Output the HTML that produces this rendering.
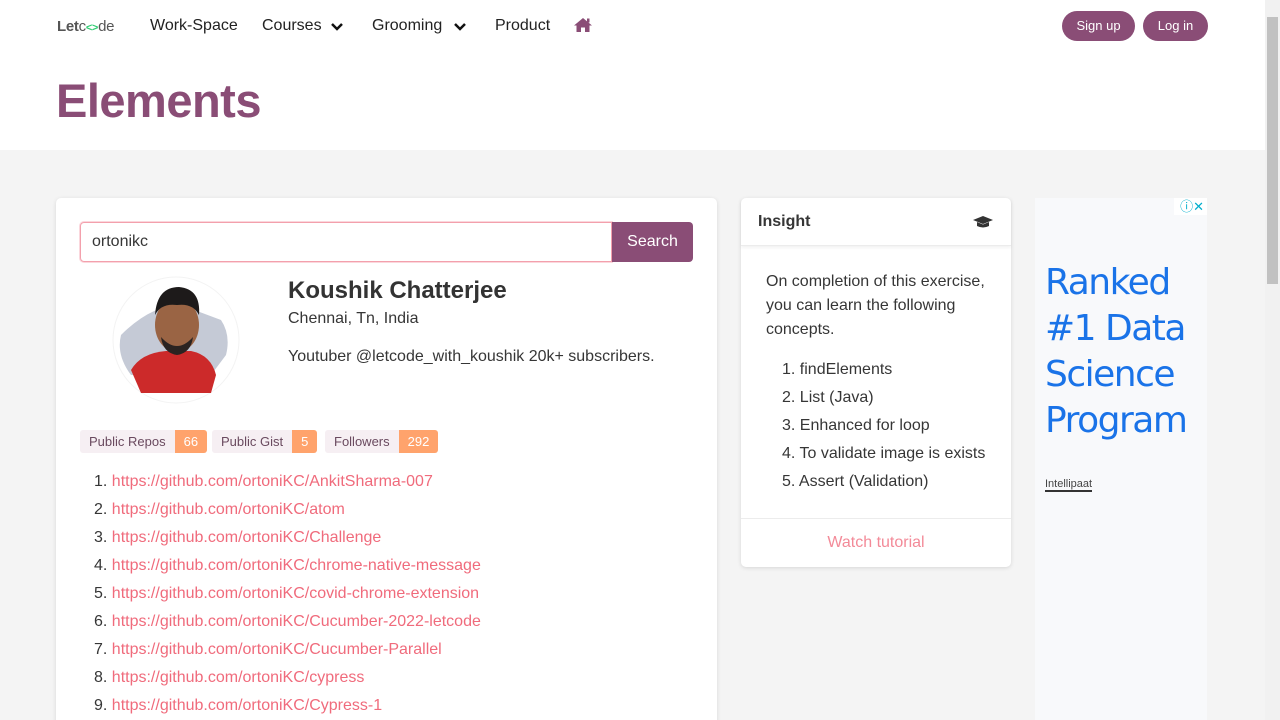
<!DOCTYPE html>
<html><head><meta charset="utf-8"><style>
*{box-sizing:border-box;margin:0;padding:0}
html,body{width:1280px;height:720px;overflow:hidden}
body{background:#f4f4f4;font-family:"Liberation Sans",sans-serif;color:#363636;position:relative}
.top{position:absolute;left:0;top:0;width:1265px;height:150px;background:#fff}
.nav{position:absolute;top:17px;font-size:16px;color:#222}
.logo{position:absolute;left:57px;top:18px;font-size:15px;color:#555;letter-spacing:-0.3px}
.btn{position:absolute;top:11px;height:30px;border-radius:15px;background:#8a4d76;color:#fff;font-size:13px;line-height:30px;text-align:center}
h1{position:absolute;left:56px;top:73px;font-size:47px;color:#8a4d76;font-weight:bold;letter-spacing:-0.5px}
.card{position:absolute;background:#fff;border-radius:5px;box-shadow:0 1px 4px rgba(0,0,0,.12)}
.input{position:absolute;left:24px;top:24px;width:532px;height:40px;border:1px solid #f3a0ac;border-radius:4px 0 0 4px;box-shadow:0 0 0 1px #fbd7dd;font-size:16px;padding:10px 11px}
.sbtn{position:absolute;left:556px;top:24px;width:81px;height:40px;background:#8a4d76;color:#fff;border-radius:0 4px 4px 0;font-size:16px;line-height:40px;text-align:center}
.badge{position:absolute;top:232px;height:23px;font-size:13px;line-height:23px;border-radius:3px;overflow:hidden;display:flex;color:#6a4a5f}
.badge span{background:#f6eff3;padding:0 9px}
.badge b{background:#ffa36c;color:#fff;font-weight:normal;padding:0 9px}
ol.links{position:absolute;left:38px;top:270px;font-size:16px;line-height:28px;list-style:none}
ol.links a{color:#f06b7c;text-decoration:none}
.scroll{position:absolute;left:1265px;top:0;width:15px;height:720px;background:#f1f1f1}
</style></head><body>
<div class="top"></div>
<div class="logo"><b style="color:#555">Let</b>c<span style="color:#2ecc71;font-weight:bold;font-size:11px">&lt;&gt;</span>de</div>
<div class="nav" style="left:150px">Work-Space</div>
<div class="nav" style="left:262px">Courses</div>
<svg style="position:absolute;left:330px;top:22px" width="14" height="10"><path d="M2 2l5 5 5-5" stroke="#111" stroke-width="2.5" fill="none"/></svg>
<div class="nav" style="left:372px">Grooming</div>
<svg style="position:absolute;left:453px;top:22px" width="14" height="10"><path d="M2 2l5 5 5-5" stroke="#111" stroke-width="2.5" fill="none"/></svg>
<div class="nav" style="left:495px">Product</div>
<svg style="position:absolute;left:574px;top:17px" width="18" height="16" viewBox="0 0 18 16"><path d="M9 1L0 8.5h2.5V15h4.5v-4.5h4V15h4.5V8.5H18z" fill="#8a4d76"/><rect x="13" y="1.5" width="2.5" height="4" fill="#8a4d76"/></svg>
<div class="btn" style="left:1062px;width:73px">Sign up</div>
<div class="btn" style="left:1143px;width:65px">Log in</div>
<h1>Elements</h1>

<div class="card" style="left:56px;top:198px;width:661px;height:540px">
<div class="input">ortonikc</div>
<div class="sbtn">Search</div>
<svg style="position:absolute;left:55px;top:77px" width="130" height="130" viewBox="0 0 130 130">
<circle cx="65" cy="65" r="63" fill="#fff" stroke="#f3f3f3"/>
<path d="M10 60 Q40 30 70 30 L110 45 Q120 60 115 80 L100 100 L20 100 Q5 80 10 60z" fill="#c5cad6"/>
<path d="M20 95 Q30 78 55 76 L80 76 Q100 80 105 100 L100 118 L30 118z" fill="#cc2a2a"/>
<ellipse cx="66" cy="50" rx="22" ry="27" fill="#9a6444"/>
<path d="M44 40 Q46 12 68 12 Q90 14 88 40 Q82 28 66 30 Q50 28 44 40z" fill="#1d1a1a"/>
<path d="M50 62 Q66 80 82 62 Q80 78 66 80 Q52 78 50 62z" fill="#2b2321"/>
</svg>
<div style="position:absolute;left:232px;top:79px;font-size:24px;font-weight:bold;color:#333">Koushik Chatterjee</div>
<div style="position:absolute;left:232px;top:112px;font-size:16px">Chennai, Tn, India</div>
<div style="position:absolute;left:232px;top:150px;font-size:16px">Youtuber @letcode_with_koushik 20k+ subscribers.</div>
<div class="badge" style="left:24px"><span>Public Repos</span><b>66</b></div>
<div class="badge" style="left:156px"><span>Public Gist</span><b>5</b></div>
<div class="badge" style="left:269px"><span>Followers</span><b>292</b></div>
<ol class="links">
<li>1. <a>https://github.com/ortoniKC/AnkitSharma-007</a></li>
<li>2. <a>https://github.com/ortoniKC/atom</a></li>
<li>3. <a>https://github.com/ortoniKC/Challenge</a></li>
<li>4. <a>https://github.com/ortoniKC/chrome-native-message</a></li>
<li>5. <a>https://github.com/ortoniKC/covid-chrome-extension</a></li>
<li>6. <a>https://github.com/ortoniKC/Cucumber-2022-letcode</a></li>
<li>7. <a>https://github.com/ortoniKC/Cucumber-Parallel</a></li>
<li>8. <a>https://github.com/ortoniKC/cypress</a></li>
<li>9. <a>https://github.com/ortoniKC/Cypress-1</a></li>
</ol>
</div>

<div class="card" style="left:741px;top:198px;width:270px;height:369px">
<div style="height:48px;border-bottom:1px solid #ececec;box-shadow:0 2px 3px rgba(0,0,0,.05);padding:15px 17px;font-weight:bold;font-size:16px">Insight</div>
<svg style="position:absolute;left:232px;top:17px" width="20" height="14" viewBox="0 0 20 14"><path d="M10 1L0 5l10 4 10-4z" fill="#333"/><path d="M4 7v4q6 3 12 0V7l-6 2.5z" fill="#333"/></svg>
<div style="position:absolute;left:25px;top:72px;width:230px;font-size:16px;line-height:24px">On completion of this exercise, you can learn the following concepts.</div>
<div style="position:absolute;left:41px;top:158px;font-size:16px;line-height:28px">1. findElements<br>2. List (Java)<br>3. Enhanced for loop<br>4. To validate image is exists<br>5. Assert (Validation)</div>
<div style="position:absolute;left:0;top:320px;width:270px;border-top:1px solid #ececec;text-align:center;padding-top:15px;font-size:16px;color:#f38a98">Watch tutorial</div>
</div>

<div style="position:absolute;left:1035px;top:198px;width:172px;height:522px;background:#f8f9fb;overflow:hidden">
<div style="position:absolute;left:10px;top:62px;font-size:36px;line-height:46px;color:#1a73e8;font-family:'DejaVu Sans',sans-serif;letter-spacing:-1.5px">Ranked<br>#1 Data<br>Science<br>Program</div>
<div style="position:absolute;left:10px;top:280px;font-size:11px;color:#444;border-bottom:2px solid #333">Intellipaat</div>
<div style="position:absolute;left:139px;top:0;width:33px;height:17px;background:#fff;color:#00aecd;font-size:13px;line-height:17px;white-space:nowrap;text-align:right;padding-right:3px">ⓘ✕</div>
</div>
<div class="scroll"><div style="position:absolute;left:2px;top:17px;width:11px;height:267px;background:#c1c1c1"></div></div>
</body></html>
